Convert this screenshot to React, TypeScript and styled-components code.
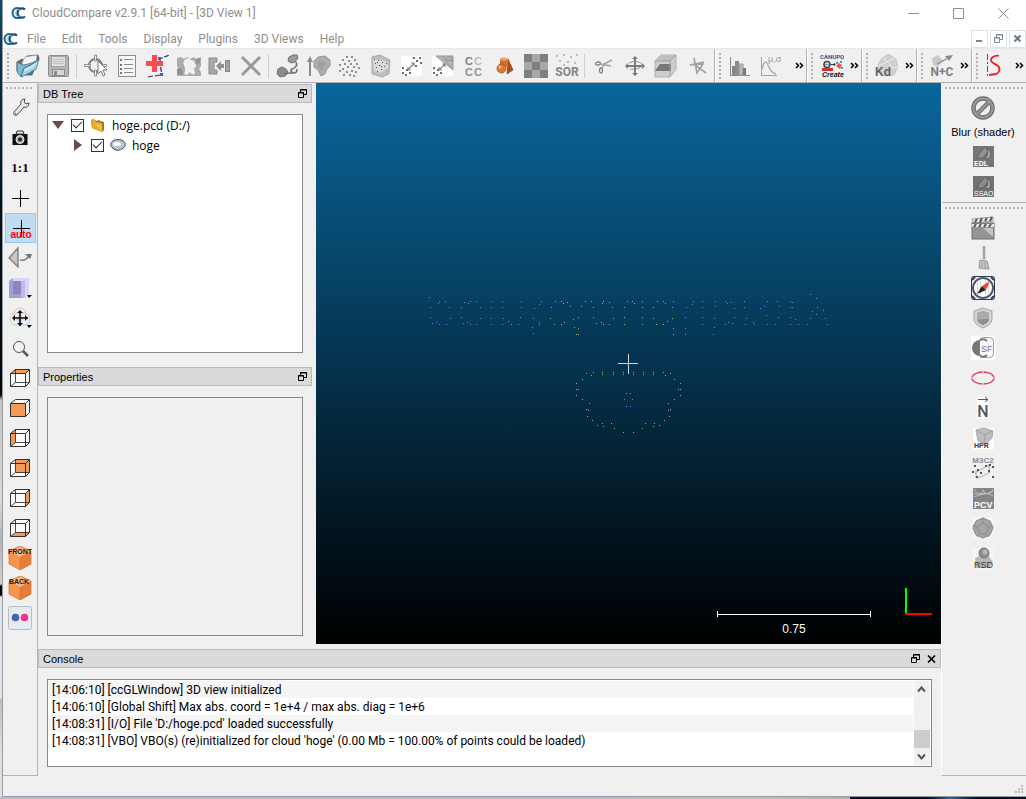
import React from 'react';
import styled, { createGlobalStyle } from 'styled-components';

const UI_FONT = 'Roboto, "Open Sans", sans-serif';
const TREE_FONT = '"Open Sans", "Noto Sans", sans-serif';
const DOCK_FONT = '"Liberation Sans", Arial, sans-serif';

const GlobalStyle = createGlobalStyle`
  *, *::before, *::after { box-sizing: border-box; }
  body { margin: 0; font-family: ${UI_FONT}; font-size: 12px; color: #000; }
  button { font: inherit; color: inherit; border: 0; padding: 0; background: none; }
  ul, ol { list-style: none; margin: 0; padding: 0; }
  svg { display: block; flex: none; }
  svg text { font-family: "Liberation Sans", sans-serif; }
`;

/* ---------- frame ---------- */

const Desktop = styled.div`
  min-height: 100vh;
  padding: 0 0 2px 2px;
  display: flex;
  background:
    linear-gradient(90deg, #b4bccb 0, #b4bccb 620px, #c4c2be 740px, #b0b0b0 850px, #06102e 850px, #06102e 930px, #2f6698 950px, #06102e 975px) bottom / 100% 2px no-repeat,
    linear-gradient(#0f4c72 0, #04304c 70px, #001420 200px, #00070c 395px, #c4c4c4 400px, #d8d8d8 500px, #b4b4b4 540px, #d0d0d0 584px, #080808 586px, #080808 595px, #dfe3f0 597px, #dfe3f0 698px, #bdbdbd 700px, #dedede 750px);
`;

const Window = styled.main`
  flex: 1;
  min-width: 0;
  display: flex;
  flex-direction: column;
  background: #f0f0f0;
  border-left: 1px solid #9a9a9a;
  border-bottom: 1px solid #9a9a9a;
`;

const TitleBar = styled.header`
  height: 26px;
  display: flex;
  align-items: center;
  gap: 6px;
  padding-left: 8px;
  background: #fff;
  color: #8e8e8e;
`;

const Title = styled.h1`
  flex: 1;
  margin: 0;
  font-size: 12px;
  font-weight: 400;
  white-space: nowrap;
`;

const CaptionButtons = styled.div`
  display: flex;
`;

const CaptionButton = styled.button`
  width: 45px;
  height: 26px;
  display: grid;
  place-items: center;
`;

const MenuBar = styled.nav`
  height: 23px;
  display: flex;
  align-items: center;
  padding-top: 3px;
  background: #fff;
  border-bottom: 1px solid #e8e8e8;
  color: #8e8e8e;
`;

const MenuList = styled.div`
  flex: 1;
  display: flex;
  padding-left: 1px;
`;

const MenuButton = styled.button`
  padding: 0 8px;
  line-height: 18px;
  white-space: nowrap;
`;

const MdiButtons = styled.div`
  display: flex;
  gap: 2px;
`;

const MdiButton = styled.button`
  width: 17px;
  height: 18px;
  display: grid;
  place-items: center;
  border: 1px solid #e2e2e2;
  background: #fff;
`;

/* ---------- tool bars ---------- */

const ToolBarRow = styled.div`
  height: 34px;
  display: flex;
  overflow: hidden;
  border-bottom: 1px solid #b0b0b0;
`;

const ToolBar = styled.div<{ $min: number; $last?: boolean }>`
  flex: ${p => (p.$last ? '1 0 auto' : 'none')};
  min-width: ${p => p.$min}px;
  display: flex;
  align-items: center;
  padding-left: 3px;
  border-left: 1px solid #fff;
  border-right: ${p => (p.$last ? '0' : '1px solid #b0b0b0')};
`;

const Handle = styled.div<{ $across?: boolean }>`
  flex: none;
  width: ${p => (p.$across ? 'auto' : '3px')};
  height: ${p => (p.$across ? '3px' : '26px')};
  margin: ${p => (p.$across ? '3px 3px' : '0 2px 0 0')};
  background: radial-gradient(circle at 1px 1px, #b2b2b2 1px, transparent 1px) 0 0 / 4px 4px;
`;

const ToolButton = styled.button`
  flex: none;
  width: 31px;
  height: 30px;
  padding-left: 4px;
  display: grid;
  align-items: center;
  justify-items: start;
`;

const Separator = styled.div`
  flex: none;
  width: 1px;
  height: 24px;
  margin: 0 3px 0 2px;
  background: #cfcfcf;
`;

const More = styled.button`
  margin-left: auto;
  width: 14px;
  height: 30px;
  display: grid;
  place-items: center;
`;

const Body = styled.div`
  flex: 1;
  display: flex;
  min-height: 0;
`;

const LeftBar = styled.aside`
  width: 35px;
  display: flex;
  flex-direction: column;
  padding-top: 1px;
  border-right: 1px solid #b4b4b4;
  border-bottom: 1px solid #b4b4b4;
`;

const SideButton = styled.button<{ $active?: boolean }>`
  height: 30px;
  margin: 0 1px 0 2px;
  padding-left: 2px;
  display: grid;
  align-items: center;
  justify-items: start;
  background: ${p => (p.$active ? '#c0dcf3' : 'none')};
  border: 1px solid ${p => (p.$active ? '#90c8f6' : 'transparent')};
`;

const RightBar = styled.aside`
  width: 85px;
  display: flex;
  flex-direction: column;
  border-left: 1px solid #fff;
  border-bottom: 1px solid #b4b4b4;
  font-family: ${DOCK_FONT};
`;

const RightGroup = styled.div`
  display: flex;
  flex-direction: column;
  padding: 1px 0 0;
  & + & { border-top: 1px solid #b0b0b0; }
`;

const PluginButton = styled.button`
  height: 30px;
  padding-right: 2px;
  display: grid;
  place-items: center;
`;

const ShaderButton = styled.button`
  height: 49px;
  display: flex;
  flex-direction: column;
  align-items: center;
  gap: 4px;
  padding: 3px 2px 0 0;
  line-height: 16px;
  font-size: 11px;
  white-space: nowrap;
`;

/* ---------- docks ---------- */

const Center = styled.div`
  flex: 1;
  min-width: 0;
  display: flex;
  flex-direction: column;
`;

const Upper = styled.div`
  flex: 1;
  display: flex;
  gap: 4px;
  min-height: 0;
`;

const DockColumn = styled.div`
  width: 274px;
  display: grid;
  grid-template-rows: 1fr 1fr;
  gap: 6px;
  padding-top: 1px;
`;

const Dock = styled.section`
  display: flex;
  flex-direction: column;
  gap: 11px;
  padding-bottom: 8px;
`;

const ConsoleDock = styled(Dock)`
  padding: 5px 0 9px;
`;

const DockTitle = styled.div`
  height: 19px;
  display: flex;
  align-items: center;
  gap: 6px;
  padding: 0 4px;
  border: 1px solid #bababa;
  background: #dadada;
  font-family: ${DOCK_FONT};
`;

const DockName = styled.h2`
  flex: 1;
  margin: 0;
  font-size: 11px;
  line-height: 16px;
  font-weight: 400;
`;

const DockButton = styled.button`
  width: 10px;
  height: 10px;
  display: grid;
  align-items: center;
  justify-items: end;
`;

const Sunken = styled.div`
  flex: 1;
  margin: 0 9px;
  border: 1px solid #828790;
`;

const TreeBox = styled(Sunken)`
  background: #fff;
  font-family: ${TREE_FONT};
`;

const TreeRow = styled.li<{ $level: number }>`
  height: 20px;
  display: flex;
  align-items: center;
  padding-left: ${p => 4 + p.$level * 20}px;
`;

const Expander = styled.button`
  width: 12px;
  height: 12px;
  margin-right: 7px;
  display: grid;
  place-items: center;
`;

const NodeLabel = styled.label`
  display: flex;
  align-items: center;
  gap: 6px;
  white-space: nowrap;
`;

const Check = styled.input`
  appearance: none;
  width: 13px;
  height: 13px;
  margin: 0;
  display: grid;
  place-items: center;
  border: 1px solid #333;
  background: #fff;
  &:checked::after {
    content: '';
    width: 9px;
    height: 5px;
    margin-bottom: 3px;
    border: solid #222;
    border-width: 0 0 1px 1px;
    transform: rotate(-45deg);
  }
`;

const ConsoleBox = styled(Sunken)`
  min-height: 88px;
  padding: 1px;
  display: flex;
  background: #fff;
`;

const LogList = styled.ol`
  flex: 1;
  min-width: 0;
`;

const LogRow = styled.li`
  padding: 1px 0 0 3px;
  line-height: 16px;
  font-size: 12px;
  white-space: nowrap;
  overflow: hidden;
  &:nth-child(odd) { background: #f5f5f5; }
`;

const ScrollTrack = styled.div`
  width: 16px;
  margin-left: 1px;
  display: flex;
  flex-direction: column;
  background: #f0f0f0;
`;

const ScrollButton = styled.button`
  height: 17px;
  padding-right: 1px;
  display: grid;
  place-items: center;
`;

const ScrollThumb = styled.div`
  height: 18px;
  margin-top: auto;
  background: #cdcdcd;
`;

const StatusBar = styled.footer`
  height: 20px;
  display: flex;
  justify-content: flex-end;
  align-items: flex-end;
  padding: 0 2px 2px;
`;

/* ---------- 3D view ---------- */

const View = styled.section`
  flex: 1;
  min-width: 0;
  position: relative;
  display: grid;
  place-items: center;
  overflow: hidden;
  background: linear-gradient(#0a669c, #000);
`;

const Overlay = styled.div`
  position: absolute;
  right: 9px;
  bottom: 8px;
  display: flex;
  align-items: flex-end;
  gap: 34px;
`;

const ScaleBar = styled.figure`
  margin: 0;
  width: 154px;
  text-align: center;
  color: #fff;
  font-family: ${DOCK_FONT};
  line-height: 14px;
`;

const ScaleRule = styled.div`
  height: 6px;
  margin-bottom: 5px;
  border: solid #fff;
  border-width: 0 1px;
  background: linear-gradient(#fff, #fff) center / 100% 1px no-repeat;
`;

const AxisMark = styled.svg`
  margin-bottom: 21px;
`;

/* ---------- icons ---------- */

const Icon = ({ children }: { children: React.ReactNode }) => (
  <svg width="24" height="24" viewBox="0 0 24 24" fill="none" aria-hidden="true">
    {children}
  </svg>
);

const Logo = () => (
  <svg width="15" height="14" viewBox="0 0 15 14" fill="none" aria-hidden="true">
    <path d="M9 2.500C5 .8 1.500 3 1.500 7S5 13.200 9 11.500" stroke="#1d6a9d" strokeWidth="2" />
    <path d="M14 3.500C11 1 6.500 3 6.500 7s4.500 6 7.500 3.500" stroke="#124a78" strokeWidth="2.200" />
    <path d="M9.500 4C7 3 4 4.500 4 7s3 4 5.500 3" stroke="#8fc3e0" />
  </svg>
);

const dots = (list: number[][], fill: string, s = 2) =>
  list.map(([x, y], i) => <rect key={i} x={x} y={y} width={s} height={s} fill={fill} />);

const icons: Record<string, React.ReactNode> = {
  open: (
    <>
      <path d="M1 8l5-3 2 1 3-4 11-1 1 3-7 17H6L1 17z" fill="#6c7377" stroke="#4a4f52" strokeWidth=".7" />
      <path d="M6 9l3-6 12-2-1 9-13 9z" fill="#f2f4f5" stroke="#999" strokeWidth=".6" />
      <path d="M1 8v10l4 5 3-9c5-2 10-4 15-9-2 2-9 5-16 6z" fill="#7db8d6" stroke="#35586c" strokeWidth=".7" />
      <path d="M5 23l3-9c5-2 10-4 15-9l-3 10c-5 3-10 6-15 8z" fill="#9fd3ee" stroke="#3d6a82" strokeWidth=".8" />
      <path d="M9 15c4-2 8-4 12-7l-1 3c-4 3-8 5-12 7z" fill="#cfeaf7" />
    </>
  ),
  save: (
    <>
      <rect x="1.500" y="1.500" width="20" height="21" rx="1" fill="#b5b5b5" stroke="#8d8d8d" />
      <rect x="4.500" y="2.500" width="14" height="10" fill="#dedede" stroke="#a5a5a5" />
      <path d="M6 5.500h11M6 7.500h11M6 9.500h11" stroke="#c4c4c4" />
      <rect x="5.500" y="15.500" width="12" height="6" fill="#d5d5d5" stroke="#8d8d8d" />
      <rect x="7" y="17" width="3" height="4" fill="#8a8a8a" />
    </>
  ),
  pick: (
    <>
      <circle cx="11.500" cy="11.500" r="6.500" stroke="#7d7d7d" strokeWidth="2" />
      <path d="M10.500 1v6h2V1zM10.500 16v6h2v-6zM.5 10.500v2h6v-2zM16.500 10.500v2h6v-2z" fill="#e8e8e8" stroke="#7d7d7d" strokeWidth=".8" />
      <path d="M14 7v13l3-3 2 5 2-1-2-5h4z" fill="#fff" stroke="#777" />
    </>
  ),
  list: (
    <>
      <rect x="3.500" y="1.500" width="17" height="21" fill="#f7f7f7" stroke="#8b8b8b" />
      <path d="M9 5.500h9M9 10.500h9M9 14.500h9M9 18.500h9" stroke="#8b8b8b" />
      {dots([[5, 5], [5, 10], [5, 14], [5, 18]], '#777')}
    </>
  ),
  addPoint: (
    <>
      <path d="M13 4h4M18 3l6-2M14 6l1 10 1 4M2 23l5-1M9 22l5-1" stroke="#333" strokeWidth="1.200" strokeDasharray="5 2" />
      <path d="M6 1h5v6h6v5h-6v6H6v-6H0V7h6z" fill="#f94b50" />
      {dots([[12, 3], [14, 19]], '#5252f0', 3)}
    </>
  ),
  clone: (
    <>
      <path d="M0 4l4-1 3 2 3-2 3 2 4-2 2 2 5-2v9l-2 3 2 3v4H0v-4l1-3-1-4z" fill="#ababab" />
      <path d="M7 7c2-3 5-3 7-1 3 0 4 2 4 4 2 1 1 4-1 4l1 6c-3 1-4 0-5-2l-3 3c-3 0-3-2-2-4 1-3-3-8-1-10z" fill="#f0f0f0" />
      <path d="M0 15l4-1 2 4-1 3H0zM19 5l4-1v5l-4 1z" fill="#939393" />
    </>
  ),
  merge: (
    <>
      <path d="M1 4h8v4H6v8h3v4H1z" fill="#a9a9a9" stroke="#898989" />
      <path d="M8 12l5-5v3h3v4h-3v3z" fill="#909090" />
      <rect x="17.500" y="6.500" width="4" height="11" fill="#a2a2a2" stroke="#898989" />
    </>
  ),
  remove: <path d="M3 3l18 18M21 3L3 21" stroke="#999" strokeWidth="3" />,
  subsample: (
    <>
      <path d="M13 3l4-2h4l1 3-3 4-4 1-3-2z" fill="#9b9b9b" stroke="#717171" />
      <path d="M2 15l4-2 4 2 2 3-3 4-5 1-3-3z" fill="#8c8c8c" stroke="#717171" />
      <path d="M20 8c2 4-1 6-4 7-2 1-1 4 2 4 2 0 3-2 3-4" stroke="#717171" strokeWidth="1.600" />
      <path d="M8 20l5-1h4" stroke="#717171" strokeWidth="1.500" />
    </>
  ),
  normals: (
    <>
      <path d="M3 22V5" stroke="#8b8b8b" strokeWidth="2" />
      <path d="M0 8l3-6 3 6z" fill="#8b8b8b" />
      <path d="M7 7l4-4 7-1 5 4v6l-3 3-2 5-4 2-3-6-4-3z" fill="#acacac" stroke="#999" />
      <path d="M11 6l8 3-5 8-3-5z" fill="#9f9f9f" />
    </>
  ),
  cloud: <>{dots([[8, 2], [13, 2], [4, 5], [10, 6], [16, 5], [1, 10], [6, 9], [12, 9], [18, 9], [9, 12], [15, 12], [4, 14], [20, 13], [1, 16], [8, 17], [13, 16], [17, 17], [5, 20], [11, 20], [15, 21]], '#8f8f8f')}</>,
  hull: (
    <>
      <path d="M3 3l8-2 10 5-1 14-7 3-10-3z" fill="#bdbdbd" stroke="#ababab" />
      <path d="M4 5l12 2 4 6-8 6-7-2z" fill="#d9d9d9" />
      {dots([[5, 5], [9, 6], [13, 8], [6, 9], [10, 11], [15, 12], [7, 13], [12, 15], [8, 17], [17, 9], [8, 8], [12, 12]], '#555', 1)}
    </>
  ),
  cloudCloud: (
    <>
      <rect x="1" y="2" width="21" height="20" fill="#fff" />
      {dots([[13, 3], [19, 3], [16, 6], [20, 8], [15, 11], [2, 13], [6, 15], [2, 18], [9, 18], [5, 20]], '#6c6c6c')}
      <path d="M8 16l6-7M8 13v3h3M11 9h3v3" stroke="#888" strokeWidth="1.200" />
    </>
  ),
  cloudMesh: (
    <>
      <rect x="1" y="2" width="21" height="20" fill="#fff" />
      <path d="M5 2h17v14z" fill="#b6b6b6" stroke="#999" />
      <path d="M11 2l3 4 5-4 3 5-8-1M14 6l6 7" stroke="#8d8d8d" strokeWidth=".8" />
      {dots([[2, 13], [6, 15], [2, 18], [9, 18], [5, 20]], '#6c6c6c')}
      <path d="M8 16l6-6M8 13v3h3M11 10h3v3" stroke="#888" strokeWidth="1.200" />
    </>
  ),
  labels: (
    <>
      <text x="3" y="11" fontSize="11" fontWeight="700" fill="#828282">C</text>
      <text x="12" y="11" fontSize="11" fontWeight="700" fill="#bcbcbc">C</text>
      <text x="3" y="22" fontSize="11" fontWeight="700" fill="#929292">C</text>
      <text x="12" y="22" fontSize="11" fontWeight="700" fill="#929292">C</text>
    </>
  ),
  primitive: (
    <>
      <path d="M15 5l5 11-6 4z" fill="#a94c19" stroke="#8d3c10" strokeWidth=".6" />
      <rect x="7" y="4" width="8" height="9" rx="2" fill="#d2702b" />
      <ellipse cx="11" cy="5" rx="4" ry="1.500" fill="#efa565" />
      <circle cx="8.500" cy="14.500" r="4.500" fill="#de7b33" stroke="#a24b18" strokeWidth=".7" />
      <circle cx="7" cy="13" r="1.500" fill="#f5b982" />
    </>
  ),
  checker: (
    <>
      <rect width="24" height="24" fill="#a8a8a8" />
      <path d="M0 0h8v8H0zM16 0h8v8h-8zM8 8h8v8H8zM0 16h8v8H0zM16 16h8v8h-8z" fill="#7f7f7f" />
    </>
  ),
  sor: (
    <>
      {dots([[1, 1], [8, 0], [15, 2], [21, 0], [4, 6], [12, 7], [19, 8], [8, 10]], '#b9b9b9')}
      <text x="12" y="22" fontSize="12" fontWeight="700" fill="#858585" textAnchor="middle" style={{ fontFamily: 'Roboto' }}>SOR</text>
    </>
  ),
  scissors: (
    <>
      <ellipse cx="6" cy="9.500" rx="2.500" ry="1.500" stroke="#818181" strokeWidth="1.300" />
      <ellipse cx="9" cy="16.500" rx="1.500" ry="2.500" stroke="#818181" strokeWidth="1.300" />
      <path d="M8 10l11 2M10 14l2-4 8-4" stroke="#a2a2a2" strokeWidth="1.500" />
    </>
  ),
  translate: (
    <>
      <path d="M12 3v18M4 12h16" stroke="#7b7b7b" strokeWidth="2" />
      <path d="M9 5l3-3 3 3zM9 19l3 3 3-3zM5 9l-3 3 3 3zM19 9l3 3-3 3z" fill="#7b7b7b" />
      <path d="M6 9c5-3 13-1 13 2s-8 5-12 4" stroke="#8f8f8f" />
    </>
  ),
  section: (
    <>
      <path d="M1 7l6-6h15v15l-6 7H1z" fill="#cdcdcd" stroke="#b0b0b0" />
      <path d="M1 7l6-6h15l-6 6z" fill="#c0c0c0" />
      <path d="M1 17l5-7h11v7z" fill="#777" />
      <path d="M16 7v16M1 7h15l6-6" stroke="#a0a0a0" />
    </>
  ),
  trace: <path d="M9 4l1 7 11 8M9 4l3 15 6-9-13 1 14-3" stroke="#a2a2a2" strokeWidth="1.600" />,
  histogram: (
    <>
      <path d="M2.500 3v18M2 21.500h20" stroke="#8a8a8a" />
      <path d="M4 12h3v9H4z" fill="#848484" />
      <path d="M7 7h4v14H7z" fill="#8b8b8b" />
      <path d="M11 10h4v11h-4z" fill="#b7b7b7" stroke="#999" />
      <path d="M15 14h3v7h-3z" fill="#777" />
    </>
  ),
  stats: (
    <>
      <path d="M2.500 3v18M2 21.500h16" stroke="#a3a3a3" />
      <path d="M3 15c2-8 4-9 6-4s4 8 8 9" stroke="#a8a8a8" strokeWidth="1.300" />
      <text x="9" y="8" fontSize="9" fill="#999">μ,σ</text>
    </>
  ),
  canupo: (
    <>
      <text x="0" y="5" fontSize="6" fontWeight="700" fill="#1d5aa0" style={{ fontFamily: 'Roboto' }}>CANUPO</text>
      <circle cx="7" cy="10.500" r="3" stroke="#444" strokeWidth="1.600" />
      <path d="M5 10.500h4" stroke="#6ab" strokeWidth="1.500" />
      <path d="M2 14h11v3H2z" fill="#d03030" />
      <path d="M16 12l3-3 3 2-2 4z" fill="#e15959" />
      {dots([[16, 8], [20, 7], [21, 13]], '#3f9cc6')}
      <path d="M11 10.500h4M14 9l1 1.500-1 1.500" stroke="#333" />
      <text x="2" y="23" fontSize="7" fontWeight="700" fontStyle="italic" fill="#111">Create</text>
    </>
  ),
  kd: (
    <>
      <path d="M3 10l4-6 7-4 7 5 2 8-4 8-9 1-7-4z" fill="#d0d0d0" stroke="#bfbfbf" strokeWidth=".7" />
      <path d="M8 3l4 5 8-4M12 8l-8 4M12 8l6 6 5-1" stroke="#eee" />
      <text x="0" y="22" fontSize="12" fontWeight="700" fill="#606060">Kd</text>
    </>
  ),
  nc: (
    <>
      <path d="M2 4l6-3 5 6-5 6-5-2z" fill="#c9c9c9" />
      <path d="M7 10L20 3" stroke="#8b8b8b" strokeWidth="1.400" />
      <path d="M15 2l8-1-4 6z" fill="#8b8b8b" />
      <text x="12" y="22" fontSize="12" fontWeight="700" fill="#808080" textAnchor="middle" style={{ fontFamily: 'Roboto' }}>N+C</text>
    </>
  ),
  curve: (
    <>
      <path d="M2.500 0v24" stroke="#555" strokeDasharray="6 2 2 2" />
      <path d="M14 2c-3-1-8 1-8 4s5 4 7 6c3 3 1 7-2 8l-7 1" stroke="#f01f24" strokeWidth="1.800" />
    </>
  ),
  wrench: (
    <>
      <path d="M6 16l7-8c-1-3 1-5 4-5l-1 3 2 2 3-1c0 3-2 5-5 4l-7 8c-3 1-4-1-3-3z" fill="#ececec" stroke="#444" />
      <circle cx="7.500" cy="17.500" r=".8" fill="#555" />
    </>
  ),
  camera: (
    <>
      <path d="M4 8h16v11H4z" fill="#111" />
      <path d="M8 8l1-3h6l1 3z" fill="#e4e4e4" stroke="#333" />
      <circle cx="12" cy="13.500" r="4" fill="#aaa" stroke="#eee" />
      <circle cx="12" cy="13.500" r="2" fill="#222" />
      <path d="M4.500 8v11M19.500 8v11" stroke="#777" />
    </>
  ),
  oneToOne: <text x="12" y="16" fontSize="13" fontWeight="700" fill="#150515" textAnchor="middle" style={{ fontFamily: 'Liberation Serif' }}>1:1</text>,
  cross: <path d="M12.500 4v17M4 12.500h17" stroke="#000" />,
  crossAuto: (
    <>
      <path d="M13.500 4v17M5 12.500h17" stroke="#000" />
      <text x="13" y="22" fontSize="10" fontWeight="700" fill="#fb0006" textAnchor="middle">auto</text>
    </>
  ),
  perspective: (
    <>
      <path d="M1 12L10 2v19z" fill="#c6c6c6" stroke="#7c7c7c" strokeWidth="1.300" />
      <path d="M12 14c4 1 7-1 9-4" stroke="#808080" strokeWidth="1.500" />
      <path d="M17 8l7 0-2 5z" fill="#777" />
    </>
  ),
  viewCube: (
    <>
      <path d="M1 5l4-3h16v16l-4 4H1z" fill="#d9d6fb" />
      <path d="M1 5l4-3v16l-4 4z" fill="#a29ed0" />
      <path d="M1 5h12v17H1z" fill="#a29ed2" />
      <path d="M5 5h8v13H5z" fill="#8a86bb" />
      <path d="M13 5h4v17h-4z" fill="#bdb9e8" />
      <path d="M19 19h5l-3 3z" fill="#000" />
    </>
  ),
  pivot: (
    <>
      <circle cx="12" cy="8" r="6" stroke="#f5b3b3" />
      <circle cx="8" cy="13" r="6" stroke="#b4e6b4" />
      <circle cx="16" cy="13" r="6" stroke="#b5c5f3" />
      <path d="M12 5v15M5 12h15" stroke="#111" strokeWidth="1.600" />
      <path d="M9 7l3-3 3 3zM9 17l3 3 3-3zM7 9l-3 3 3 3zM17 9l3 3-3 3z" fill="#111" />
      <path d="M19 19h5l-3 3z" fill="#000" />
    </>
  ),
  zoom: (
    <>
      <circle cx="11" cy="11" r="5.500" fill="#f2f5f6" stroke="#555" />
      <path d="M15 15l5 5" stroke="#555" strokeWidth="2.500" />
    </>
  ),
  flickr: (
    <>
      <rect x=".5" y=".5" width="23" height="23" rx="2" fill="#e6ebef" stroke="#b4bec6" />
      <circle cx="7.500" cy="11.500" r="3.800" fill="#4563b4" />
      <circle cx="16.500" cy="11.500" r="3.800" fill="#e83590" />
    </>
  ),
  forbid: (
    <>
      <circle cx="12" cy="12" r="9.500" stroke="#666" strokeWidth="4.500" />
      <path d="M6 18L18 6" stroke="#666" strokeWidth="4.500" />
      <circle cx="12" cy="12" r="9.500" stroke="#959595" strokeWidth="2.500" />
      <path d="M5 19L19 5" stroke="#959595" strokeWidth="2.500" />
    </>
  ),
  edl: (
    <>
      <rect x="2" y="1" width="21" height="21" fill="#767676" />
      <path d="M6 13l2-4 6-7 4 2-3 5-3 4z" fill="#929292" stroke="#5b5b5b" strokeWidth=".8" />
      <path d="M16 4c4 1 5 6 2 10l-4-1c3-2 3-5 2-9z" fill="#a4a4a4" stroke="#5b5b5b" strokeWidth=".8" />
      <text x="3" y="21" fontSize="7" fontWeight="700" fill="#fff">EDL</text>
    </>
  ),
  ssao: (
    <>
      <rect x="2" y="1" width="21" height="21" fill="#727272" />
      <path d="M6 13l2-4 6-7 4 2-3 5-3 4z" fill="#8b8b8b" stroke="#5b5b5b" strokeWidth=".8" />
      <path d="M16 4c4 1 5 6 2 10l-4-1c3-2 3-5 2-9z" fill="#9d9d9d" stroke="#5b5b5b" strokeWidth=".8" />
      <text x="3" y="21" fontSize="7" fill="#fff">SSAO</text>
    </>
  ),
  clap: (
    <>
      <path d="M1 3l21-2v4L2 7z" fill="#eee" stroke="#777" strokeWidth=".7" />
      <path d="M4 6l2-3M9 6l2-4M14 5l2-3M19 5l2-4" stroke="#555" strokeWidth="2" />
      <rect x="1" y="7" width="22" height="16" fill="#949494" stroke="#6c6c6c" />
      <path d="M1 8h22v3H1z" fill="#e8e8e8" />
      <path d="M3 11l2-3M8 11l2-3M13 11l2-3M18 11l2-3" stroke="#555" strokeWidth="2" />
      <path d="M12 12h10v9z" fill="#c4c4c4" />
    </>
  ),
  broom: (
    <>
      <path d="M12 0h2v13h-2z" fill="#aaa" stroke="#909090" strokeWidth=".5" />
      <path d="M9 14l7 1 2 8-10-1z" fill="#c4c4c4" stroke="#959595" />
      <path d="M11 16v5M14 16v6" stroke="#999" />
    </>
  ),
  compass: (
    <>
      <rect x=".5" y=".5" width="23" height="23" rx="2" fill="#f5f5f5" stroke="#333c4c" />
      <path d="M1 4l3-3M20 1l3 3M1 20l3 3M23 20l-3 3" stroke="#333c4c" strokeWidth="2" />
      <circle cx="12" cy="12" r="10" fill="#fff" stroke="#4c5a70" strokeWidth="2" />
      <path d="M6.500 7v10M9.500 5v14M14.500 5v14M17.500 7v10" stroke="#d0d0d0" />
      <path d="M19 5l-4 9-4-4z" fill="#ee3f3a" />
      <path d="M6 18l5-8 4 4z" fill="#222" />
    </>
  ),
  shield: (
    <>
      <path d="M12 2l9 3v8c0 5-5 7-9 9-4-2-9-4-9-9V5z" fill="#d3d3d3" stroke="#a4a4a4" />
      <path d="M12 5l6 2v6c0 3-3 5-6 6-3-1-6-3-6-6V7z" fill="#8e8e8e" />
      <path d="M12 5l6 2v6c-4 0-9 0-12 1V7z" fill="#ababab" />
    </>
  ),
  sf: (
    <>
      <rect width="24" height="24" fill="#fff" />
      <rect x="8.500" y="1.500" width="14" height="20" rx="4" fill="#f7f7f7" stroke="#9b9b9b" />
      <path d="M9 4a8 8 0 0 0 0 16z" fill="#777" />
      <path d="M9 4c2-1 5-1 7 1M9 20c2 1 5 1 7-1" stroke="#777" strokeWidth="2" />
      <text x="10" y="16" fontSize="9" fill="#777">SF</text>
    </>
  ),
  ellipse: (
    <>
      <ellipse cx="12" cy="12" rx="11" ry="6" stroke="#e0405c" strokeWidth="1.400" />
      {dots([[11, 5], [11, 17], [0, 11], [22, 11]], '#f2a3b0')}
    </>
  ),
  normalN: (
    <>
      <rect x="6" y="1" width="12" height="22" fill="#fff" />
      <path d="M7 3.500h10M14 1l3 2.500L14 6" stroke="#555" />
      <text x="12" y="21" fontSize="16" fontWeight="500" fill="#555" textAnchor="middle" style={{ fontFamily: 'Roboto' }}>N</text>
    </>
  ),
  hpr: (
    <>
      <rect x="2" y="2" width="21" height="21" fill="#fff" />
      <path d="M5 4l8-2 9 3-1 7-6 6-8-3z" fill="#bdbdbd" stroke="#aaa" />
      <path d="M5 4l9 5 7-4M14 9l-1 8" stroke="#999" strokeWidth=".8" />
      <text x="3" y="22" fontSize="7" fontWeight="700" fill="#333">HPR</text>
    </>
  ),
  m3c2: (
    <>
      <text x="12" y="7" fontSize="8" fontWeight="700" fill="#8a8a8a" textAnchor="middle">M3C2</text>
      <path d="M4 17c6-3 8-5 14-8M5 22c6-1 9-3 14-6M5 14v8M18 8v9" stroke="#999" strokeWidth=".8" />
      {dots([[3, 9], [1, 15], [6, 13], [9, 16], [5, 20], [14, 9], [18, 8], [21, 10], [17, 14], [21, 20]], '#555')}
    </>
  ),
  pcv: (
    <>
      <rect x="2" y="2" width="21" height="21" fill="#858585" />
      <path d="M3 3c3 6 8 6 9 1M12 4c3 6 8 4 10-1M3 11c6-3 12-2 19-6M3 8c6 1 12-3 19 2" stroke="#ccc" strokeWidth=".8" />
      <text x="3" y="22" fontSize="9" fontWeight="700" fill="#fff">PCV</text>
    </>
  ),
  facets: (
    <>
      <rect x="2" y="2" width="20" height="20" fill="#f7f7f7" />
      <path d="M12 2l7 3 3 7-3 7-7 3-7-3-3-7 3-7z" fill="#a5a5a5" stroke="#888" />
      <path d="M12 7l6 4-3 7H9l-3-7zM12 7V2M18 11l4-2M15 18l3 3M9 18l-3 3M6 11L2 9" stroke="#858585" strokeWidth=".8" />
    </>
  ),
  rsd: (
    <>
      <rect x="2" y="2" width="21" height="21" fill="#f5f5f5" />
      <path d="M4 12l5-2 8-1 5 7-4 6H5z" fill="#b7b7b7" />
      <circle cx="13" cy="7" r="5" fill="#8d8d8d" stroke="#777" />
      <circle cx="14" cy="6" r="2.500" fill="#b8b8b8" />
      <text x="3" y="22" fontSize="9" fill="#333">RSD</text>
    </>
  ),
};

const faces: Record<string, string> = {
  top: '2.5,7.5 7.5,3.5 21.5,3.5 17.5,7.5',
  front: '2.5,7.5 17.5,7.5 17.5,20.5 2.5,20.5',
  left: '2.5,7.5 7.5,3.5 7.5,16.5 2.5,20.5',
  back: '7.5,3.5 21.5,3.5 21.5,16.5 7.5,16.5',
  right: '17.5,7.5 21.5,3.5 21.5,16.5 17.5,20.5',
  bottom: '2.5,20.5 7.5,16.5 21.5,16.5 17.5,20.5',
};

const FaceCube = ({ face }: { face: string }) => (
  <Icon>
    <path d="M2.500 7.500h15v13h-15z" fill="#fafafa" />
    <path d="M7.500 3.500h14v13h-14z" fill="#fafafa" />
    <polygon points={faces[face]} fill="#f59a55" />
    <path d="M7.500 3.500v13h14M2.500 20.500l5-4" stroke="#1e1e1e" strokeWidth={face === 'front' ? 0 : 0.8} />
    <path d="M2.500 7.500h15v13h-15zM7.500 3.500h14v13M2.500 7.500l5-4M17.500 7.500l4-4M17.500 20.500l4-4" stroke="#1e1e1e" strokeWidth=".9" />
  </Icon>
);

const IsoCube = ({ label }: { label: string }) => (
  <Icon>
    <path d="M12 0l11 5v13l-11 6L1 18V5z" fill="#f9944f" />
    <path d="M12 11l11-6v13l-11 6z" fill="#e37f3a" />
    <path d="M12 0l11 5-11 6L1 5z" fill="#fbb27c" />
    <path d="M12 0l11 5v13l-11 6L1 18V5zM12 12v12" stroke="#d4722f" strokeWidth=".7" />
    <text x={label === 'FRONT' ? 12 : 11} y="8" fontSize="7" fontWeight="700" fill="#1b1b1b" textAnchor="middle">{label}</text>
  </Icon>
);

const Chevrons = () => (
  <svg width="9" height="7" viewBox="0 0 9 7" fill="none" stroke="#000" strokeWidth="1.500" aria-hidden="true">
    <path d="M1 1l2.500 2.500L1 6M5 1l2.500 2.500L5 6" />
  </svg>
);

const FloatGlyph = () => (
  <svg width="9" height="9" viewBox="0 0 9 9" fill="none" stroke="#000" aria-hidden="true">
    <path d="M2.500 3V.5h6v5H6M2 1h7" />
    <path d="M.5 3.500h5v5h-5zM0 4h6" />
  </svg>
);

/* ---------- content ---------- */

const menus = ['File', 'Edit', 'Tools', 'Display', 'Plugins', '3D Views', 'Help'];

const mainTools: string[][] = [
  ['open', 'save'],
  ['pick', 'list', 'addPoint', 'clone', 'merge', 'remove'],
  ['subsample', 'normals', 'cloud', 'hull', 'cloudCloud', 'cloudMesh', 'labels', 'primitive', 'checker', 'sor'],
  ['scissors', 'translate', 'section', 'trace'],
];

const pluginBars = ['canupo', 'kd', 'nc', 'curve'];
const leftTools = ['wrench', 'camera', 'oneToOne', 'cross', 'crossAuto', 'perspective', 'viewCube', 'pivot', 'zoom'];
const plugins = ['clap', 'broom', 'compass', 'shield', 'sf', 'ellipse', 'normalN', 'hpr', 'm3c2', 'pcv', 'facets', 'rsd'];

const log = [
  '[14:06:10] [ccGLWindow] 3D view initialized',
  '[14:06:10] [Global Shift] Max abs. coord = 1e+4 / max abs. diag = 1e+6',
  "[14:08:31] [I/O] File 'D:/hoge.pcd' loaded successfully",
  "[14:08:31] [VBO] VBO(s) (re)initialized for cloud 'hoge' (0.00 Mb = 100.00% of points could be loaded)",
];

const violet: number[][] = [
  [28, 37], [58, 49], [76, 49], [55, 55], [31, 67], [88, 67], [31, 97], [91, 100], [37, 115], [49, 112], [58, 118], [79, 118],
  [133, 52], [151, 49], [169, 49], [145, 55], [124, 67], [181, 67], [124, 97], [181, 100], [130, 115], [142, 112], [151, 118], [169, 118],
  [214, 49], [214, 67], [214, 100], [214, 118], [247, 49], [247, 67], [250, 100], [247, 118], [265, 109], [274, 118], [295, 118],
  [304, 49], [304, 67], [301, 97], [364, 49], [358, 58], [343, 70], [340, 100], [358, 112], [358, 118], [337, 127], [340, 145],
  [820, 49], [817, 58], [799, 67], [796, 97], [796, 130], [796, 148], [847, 49], [847, 67], [847, 97], [847, 118],
  [886, 49], [886, 64], [883, 100], [883, 127], [880, 148], [916, 49], [922, 55], [934, 52], [943, 70], [943, 97], [925, 112], [937, 115], [916, 118],
  [973, 49], [973, 67], [979, 100], [976, 118], [1000, 112], [1003, 118], [1042, 49], [1033, 64], [1021, 70], [1039, 91], [1042, 118], [1066, 118],
  [1072, 49], [1078, 64], [1075, 97], [1111, 49], [1117, 52], [1111, 67], [1117, 67], [1111, 97], [1126, 103], [1111, 118], [1135, 118],
  [1171, 28], [1189, 40], [1192, 67], [1177, 79], [1189, 88], [1210, 76], [1171, 100], [1216, 100], [1162, 118], [1222, 118],
  [619, 325], [631, 325], [613, 343], [637, 343], [619, 364], [631, 364],
];

const olive: number[][] = [
  [406, 49], [424, 49], [430, 55], [442, 52], [451, 64], [394, 67], [391, 100], [403, 118], [424, 118], [433, 112], [460, 103], [475, 97], [463, 127], [475, 130], [469, 148], [475, 148],
  [496, 49], [514, 49], [484, 64], [520, 67], [520, 97], [529, 115], [544, 112], [550, 118], [568, 118], [580, 100], [577, 67], [568, 52], [550, 49], [547, 55],
  [622, 49], [637, 49], [643, 55], [613, 67], [613, 97], [613, 118], [667, 49], [667, 67], [667, 97], [667, 118],
  [712, 49], [730, 49], [736, 55], [760, 49], [757, 67], [700, 67], [700, 100], [709, 118], [730, 118], [742, 109], [757, 100], [760, 130], [760, 148],
  [499, 265], [520, 262], [514, 271], [547, 262], [547, 268], [580, 262], [580, 268], [610, 262], [610, 268], [640, 262], [640, 268], [670, 262], [670, 268], [700, 262], [700, 268], [730, 262], [736, 271], [751, 265],
  [487, 283], [469, 295], [469, 313], [475, 313], [469, 331], [487, 343], [508, 355], [499, 373], [505, 376], [502, 394], [517, 406], [532, 421], [547, 415], [550, 424], [574, 415], [583, 430], [610, 442],
  [763, 283], [781, 295], [775, 313], [781, 313], [781, 331], [763, 343], [745, 355], [751, 373], [745, 376], [748, 394], [733, 406], [718, 421], [703, 415], [700, 424], [676, 415], [667, 430], [640, 442],
];

const PointCloud = () => (
  <svg width="417" height="157" viewBox="0 0 1251 471" role="img" aria-label="Point cloud" shapeRendering="crispEdges">
    {violet.map(([x, y], i) => <rect key={`v${i}`} x={x - 1} y={y - 1} width="3" height="3" fill="#8376f4" />)}
    {olive.map(([x, y], i) => <rect key={`o${i}`} x={x - 1} y={y - 1} width="3" height="3" fill="#98b868" />)}
    <rect x="594" y="234" width="60" height="3" fill="#d8d8d8" />
    <rect x="624" y="207" width="3" height="60" fill="#d8d8d8" />
  </svg>
);

const Tool = ({ name }: { name: string }) => (
  <ToolButton type="button" aria-label={name}>
    <Icon>{icons[name]}</Icon>
  </ToolButton>
);

const DockHeader = ({ name, closable }: { name: string; closable?: boolean }) => (
  <DockTitle>
    <DockName>{name}</DockName>
    <DockButton type="button" aria-label={`Float ${name}`}><FloatGlyph /></DockButton>
    {closable && (
      <DockButton type="button" aria-label={`Close ${name}`}>
        <svg width="9" height="8" viewBox="0 0 9 8" stroke="#000" strokeWidth="1.600" aria-hidden="true"><path d="M1 .5l7 7M8 .5l-7 7" /></svg>
      </DockButton>
    )}
  </DockTitle>
);

export default function App() {
  return (
    <Desktop>
      <GlobalStyle />
      <Window>
        <TitleBar>
          <Logo />
          <Title>CloudCompare v2.9.1 [64-bit] - [3D View 1]</Title>
          <CaptionButtons>
            <CaptionButton type="button" aria-label="Minimize">
              <svg width="11" height="11" viewBox="0 0 11 11" stroke="#8e8e8e"><path d="M0 5.500h11" /></svg>
            </CaptionButton>
            <CaptionButton type="button" aria-label="Maximize">
              <svg width="11" height="11" viewBox="0 0 11 11" fill="none" stroke="#8e8e8e"><path d="M.5.5h10v10H.5z" /></svg>
            </CaptionButton>
            <CaptionButton type="button" aria-label="Close">
              <svg width="11" height="11" viewBox="0 0 11 11" stroke="#8e8e8e"><path d="M.5.5l10 10M10.500.5l-10 10" /></svg>
            </CaptionButton>
          </CaptionButtons>
        </TitleBar>
        <MenuBar>
          <Logo />
          <MenuList>
            {menus.map(m => <MenuButton type="button" key={m}>{m}</MenuButton>)}
          </MenuList>
          <MdiButtons>
            <MdiButton type="button" aria-label="Minimize view">
              <svg width="9" height="9" viewBox="0 0 9 9"><path d="M1 6h6v2H1z" fill="#7a8796" /></svg>
            </MdiButton>
            <MdiButton type="button" aria-label="Restore view">
              <svg width="9" height="9" viewBox="0 0 9 9" fill="none" stroke="#7a8796"><path d="M2.500 3V.5h6v5H6M2 1h7M.5 3.500h5v5h-5zM0 4h6" /></svg>
            </MdiButton>
            <MdiButton type="button" aria-label="Close view">
              <svg width="9" height="9" viewBox="0 0 9 9" stroke="#6b7889" strokeWidth="2"><path d="M1.500 1.500l6 6M7.500 1.500l-6 6" /></svg>
            </MdiButton>
          </MdiButtons>
        </MenuBar>

        <ToolBarRow>
          <ToolBar $min={712}>
            <Handle />
            {mainTools.map((group, i) => (
              <React.Fragment key={i}>
                {i > 0 && <Separator />}
                {group.map(name => <Tool key={name} name={name} />)}
              </React.Fragment>
            ))}
          </ToolBar>
          <ToolBar $min={92}>
            <Handle />
            <Tool name="histogram" />
            <Tool name="stats" />
            <More type="button" aria-label="More tools"><Chevrons /></More>
          </ToolBar>
          {pluginBars.map(name => (
            <ToolBar key={name} $min={54} $last={name === 'curve'}>
              <Handle />
              <Tool name={name} />
              <More type="button" aria-label="More tools"><Chevrons /></More>
            </ToolBar>
          ))}
        </ToolBarRow>

        <Body>
          <LeftBar>
            <Handle $across />
            {leftTools.map(name => (
              <SideButton type="button" key={name} aria-label={name} $active={name === 'crossAuto'}>
                <Icon>{icons[name]}</Icon>
              </SideButton>
            ))}
            {Object.keys(faces).map(face => (
              <SideButton type="button" key={face} aria-label={`${face} view`}><FaceCube face={face} /></SideButton>
            ))}
            <SideButton type="button" aria-label="Front isometric"><IsoCube label="FRONT" /></SideButton>
            <SideButton type="button" aria-label="Back isometric"><IsoCube label="BACK" /></SideButton>
            <SideButton type="button" aria-label="Stereo"><Icon>{icons.flickr}</Icon></SideButton>
          </LeftBar>

          <Center>
            <Upper>
              <DockColumn>
                <Dock>
                  <DockHeader name="DB Tree" />
                  <TreeBox>
                    <ul>
                      <TreeRow $level={0}>
                        <Expander type="button" aria-label="Collapse">
                          <svg width="12" height="8" viewBox="0 0 12 8"><path d="M0 0h12L6 8z" fill="#6a4b4b" /></svg>
                        </Expander>
                        <NodeLabel>
                          <Check type="checkbox" defaultChecked />
                          <svg width="16" height="16" viewBox="0 0 16 16">
                            <path d="M1 3l2-1 4 2 1-1 6 2v8l-2 2L2 11z" fill="#a97812" />
                            <path d="M1 3l1 8 10 4V6L6 5 5 3z" fill="#e6a92a" />
                            <path d="M3 6l9 2v6" fill="#f0bf4c" />
                          </svg>
                          hoge.pcd (D:/)
                        </NodeLabel>
                      </TreeRow>
                      <TreeRow $level={1}>
                        <Expander type="button" aria-label="Expand">
                          <svg width="8" height="12" viewBox="0 0 8 12"><path d="M0 0v12l8-6z" fill="#6a4b4b" /></svg>
                        </Expander>
                        <NodeLabel>
                          <Check type="checkbox" defaultChecked />
                          <svg width="16" height="16" viewBox="0 0 16 16">
                            <path d="M3 4c2-2 8-2 10 0 3 1 3 6 0 7-3 3-8 3-10 0-3-1-3-6 0-7z" fill="#b9c5d4" stroke="#444" />
                            <ellipse cx="7" cy="7" rx="4" ry="2" fill="#f5f8fc" />
                          </svg>
                          hoge
                        </NodeLabel>
                      </TreeRow>
                    </ul>
                  </TreeBox>
                </Dock>
                <Dock>
                  <DockHeader name="Properties" />
                  <Sunken />
                </Dock>
              </DockColumn>
              <View aria-label="3D View 1">
                <PointCloud />
                <Overlay>
                  <ScaleBar>
                    <ScaleRule />
                    0.75
                  </ScaleBar>
                  <AxisMark width="27" height="27" viewBox="0 0 27 27" aria-hidden="true">
                    <path d="M0 0h2v25H0z" fill="#0f0" />
                    <path d="M0 25h27v2H0z" fill="#f00" />
                  </AxisMark>
                </Overlay>
              </View>
            </Upper>

            <ConsoleDock>
              <DockHeader name="Console" closable />
              <ConsoleBox>
                <LogList>
                  {log.map(line => <LogRow key={line}>{line}</LogRow>)}
                </LogList>
                <ScrollTrack>
                  <ScrollButton type="button" aria-label="Scroll up">
                    <svg width="9" height="7" viewBox="0 0 9 7" fill="none" stroke="#555" strokeWidth="2"><path d="M1 5.500l3.500-4 3.500 4" /></svg>
                  </ScrollButton>
                  <ScrollThumb />
                  <ScrollButton type="button" aria-label="Scroll down">
                    <svg width="9" height="7" viewBox="0 0 9 7" fill="none" stroke="#555" strokeWidth="2"><path d="M1 1.500l3.500 4 3.500-4" /></svg>
                  </ScrollButton>
                </ScrollTrack>
              </ConsoleBox>
            </ConsoleDock>
          </Center>

          <RightBar>
            <RightGroup>
              <Handle $across />
              <ShaderButton type="button">
                <Icon>{icons.forbid}</Icon>
                Blur (shader)
              </ShaderButton>
              {['edl', 'ssao'].map(name => (
                <PluginButton type="button" key={name} aria-label={name}><Icon>{icons[name]}</Icon></PluginButton>
              ))}
            </RightGroup>
            <RightGroup>
              <Handle $across />
              {plugins.map(name => (
                <PluginButton type="button" key={name} aria-label={name}><Icon>{icons[name]}</Icon></PluginButton>
              ))}
            </RightGroup>
          </RightBar>
        </Body>

        <StatusBar>
          <svg width="9" height="9" viewBox="0 0 9 9" fill="#bdbdbd" aria-hidden="true">
            <path d="M6 0h2v2H6zM6 3h2v2H6zM3 3h2v2H3zM6 6h2v2H6zM3 6h2v2H3zM0 6h2v2H0z" />
          </svg>
        </StatusBar>
      </Window>
    </Desktop>
  );
}
